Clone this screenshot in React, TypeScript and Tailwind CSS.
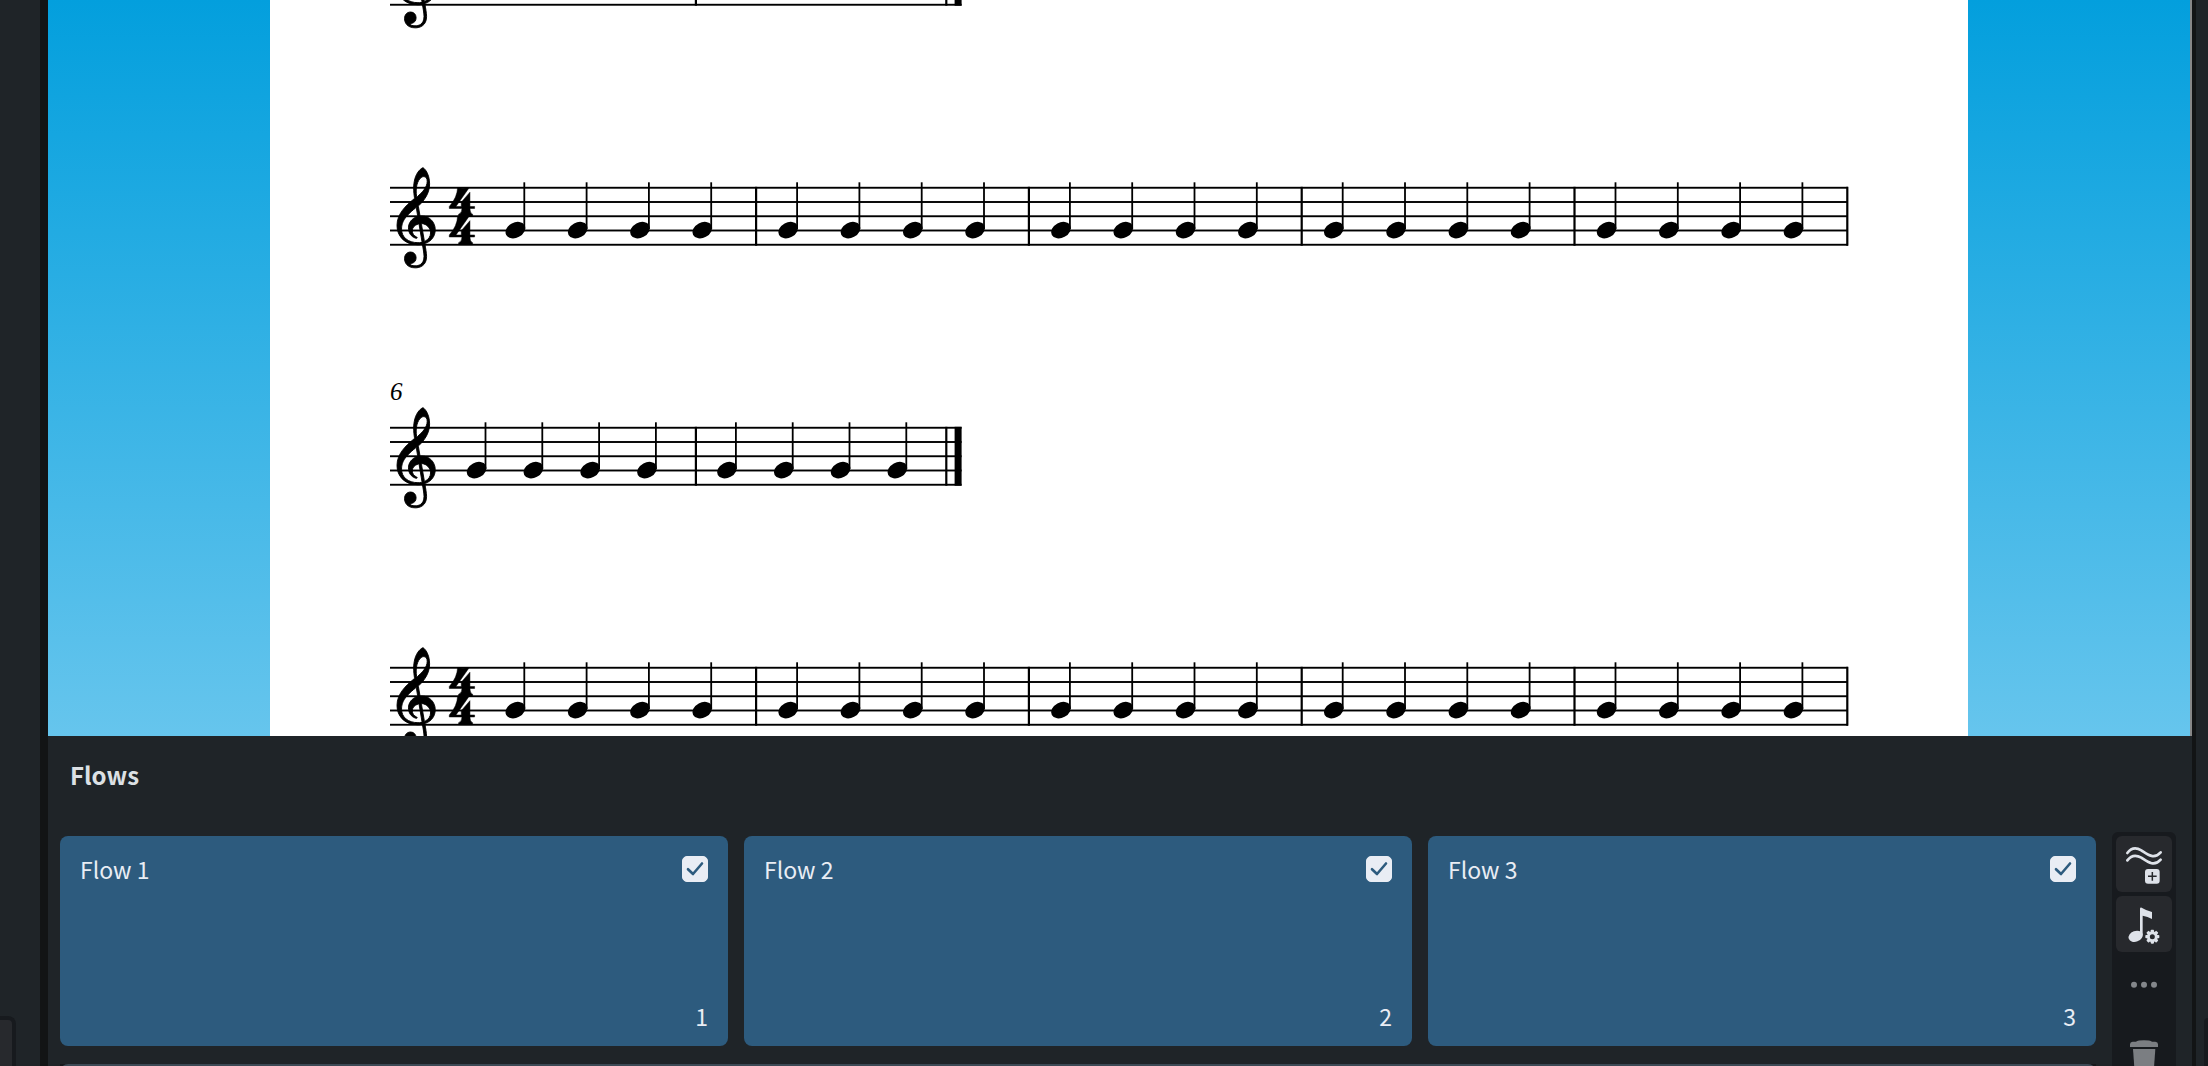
import React from "react";

const G_CLEF =
  "M364 -252c-245 0 -364 165 -364 339c0 202 153 345 297 464c12 10 11 12 9 24c-7 41 -14 106 -14 164c0 104 24 229 98 311c20 22 51 48 65 48c11 0 37 -28 52 -50c41 -60 65 -146 65 -233c0 -153 -82 -280 -190 -381c-6 -6 -8 -7 -6 -19l25 -145c3 -18 3 -18 29 -18c147 0 241 -113 241 -241c0 -113 -67 -198 -168 -238c-14 -6 -15 -5 -13 -17c11 -62 29 -157 29 -214c0 -170 -130 -200 -197 -200c-151 0 -190 98 -190 163c0 62 40 115 107 115c61 0 96 -47 96 -102c0 -58 -36 -85 -67 -94c-23 -7 -32 -10 -32 -17c0 -13 26 -29 80 -29c59 0 158 18 158 166c0 47 -15 134 -27 201c-2 12 -4 11 -15 9c-20 -4 -46 -6 -69 -6zM80 20c0 -139 113 -236 288 -236c20 0 40 2 56 5c15 3 16 3 14 14l-50 298c-2 11 -4 12 -20 8c-61 -17 -100 -60 -100 -117c0 -46 30 -89 72 -107c7 -3 15 -6 15 -13c0 -6 -4 -11 -12 -11c-7 0 -19 3 -27 6c-68 23 -115 87 -115 177c0 85 57 164 145 194c18 6 18 5 15 24l-21 128c-2 11 -4 12 -14 4c-47 -38 -93 -75 -153 -142c-83 -94 -93 -173 -93 -232zM470 943c-61 0 -133 -96 -133 -252c0 -32 2 -66 6 -92c2 -13 6 -14 13 -8c79 69 174 159 174 270c0 55 -27 82 -60 82zM441 117c-12 1 -13 -2 -11 -14l49 -285c2 -12 4 -12 16 -6c56 28 94 79 94 142c0 88 -67 156 -148 163z";

const METER_FOUR =
  "M25 0Q41 4 58 0V3L20 57H36V44L62 14V57H76V63H62Q62 77 70 80V86H28V80Q38 77 38 63H0V57Q24 30 25 0Z";

const TOP = 59.8;
const GAP = 14.25;

type SystemProps = {
  measures: number;
  width: number;
  firstStem: number;
  noteGap: number;
  measureWidth: number;
  meter?: boolean;
  final?: boolean;
  label?: string;
};

function Note({ x }: { x: number }) {
  const y = TOP + GAP * 3 - 0.4;
  return (
    <g>
      <ellipse cx={x - 8.9} cy={y} rx="10.4" ry="7.6" transform={`rotate(-28 ${x - 8.9} ${y})`} />
      <rect x={x - 0.9} y={TOP - 5.5} width="1.8" height={GAP * 3 + 4} />
    </g>
  );
}

function System({ measures, width, firstStem, noteGap, measureWidth, meter, final, label }: SystemProps) {
  const firstBar = width - (final ? 15.4 : 0.8) - measureWidth * (measures - 1);
  return (
    <svg viewBox="0 0 1458 240" className="block w-full overflow-visible" fill="#000" role="img" aria-label="Staff">
      {[0, 1, 2, 3, 4].map((i) => (
        <rect key={i} x="0" y={TOP + i * GAP - 1} width={width} height="1.9" />
      ))}
      <g transform={`translate(7 ${TOP + GAP * 3 - 0.2}) scale(0.057 -0.057)`} stroke="#000" strokeWidth="16">
        <path d={G_CLEF} />
      </g>
      {meter && (
        <g stroke="#000" strokeWidth="1.5">
          <path d={METER_FOUR} transform={`translate(59.3 ${TOP - 0.3}) scale(0.333)`} />
          <path d={METER_FOUR} transform={`translate(59.3 ${TOP + GAP * 2 - 0.3}) scale(0.333)`} />
        </g>
      )}
      {Array.from({ length: measures }, (_, m) => (
        <g key={m}>
          {[0, 1, 2, 3].map((n) => (
            <Note key={n} x={firstStem + m * measureWidth + n * noteGap} />
          ))}
          <rect x={firstBar + m * measureWidth - 1} y={TOP - 1} width="2.2" height={GAP * 4 + 1.9} />
        </g>
      ))}
      {final && <rect x={width - 7} y={TOP - 1} width="7" height={GAP * 4 + 1.9} />}
      {label && (
        <text x="0" y="32" fontFamily="'Liberation Serif', serif" fontStyle="italic" fontSize="25">
          {label}
        </text>
      )}
    </svg>
  );
}

function LongSystem() {
  return <System measures={5} width={1458} firstStem={134.3} noteGap={62.3} measureWidth={272.8} meter />;
}

function ShortSystem({ label }: { label?: string }) {
  return (
    <System measures={2} width={571.6} firstStem={95.5} noteGap={56.8} measureWidth={250.4} final label={label} />
  );
}

function FlowCard({ index }: { index: number }) {
  const id = `flow-${index}`;
  return (
    <article className="flex h-[210px] flex-1 flex-col justify-between rounded-lg bg-[#2d5b7e] px-5 pt-5 pb-[14px] text-[23px] text-[#e9edf4]">
      <div className="flex h-[26px] items-center justify-between">
        <label htmlFor={id}>Flow {index}</label>
        <span className="grid">
          <input
            id={id}
            type="checkbox"
            defaultChecked
            className="peer col-start-1 row-start-1 size-[26px] appearance-none rounded-[5px] border border-[#e9edf4] checked:bg-[#e9edf4]"
          />
          <svg
            viewBox="0 0 26 26"
            className="pointer-events-none invisible col-start-1 row-start-1 size-[26px] peer-checked:visible"
            fill="none"
            stroke="#2d5b7e"
            strokeWidth="2.6"
            strokeLinecap="round"
            strokeLinejoin="round"
          >
            <path d="M6 13.2L11 18L20 7.5" />
          </svg>
        </span>
      </div>
      <span className="text-right leading-8">{index}</span>
    </article>
  );
}

const TEETH = [0, 45, 90, 135, 180, 225, 270, 315];

function ToolButton({ label, raised, children }: { label: string; raised?: boolean; children: React.ReactNode }) {
  return (
    <button
      type="button"
      aria-label={label}
      className={raised ? "size-14 shrink-0 rounded-md bg-[#27292d]" : "size-14 shrink-0 rounded-md"}
    >
      <svg viewBox="0 0 168 168" className="block size-14">
        {children}
      </svg>
    </button>
  );
}

function Toolbar() {
  return (
    <div className="-mt-1 flex h-[340px] w-16 flex-col items-center gap-1 rounded-md bg-[#171a1e] pt-1">
      <ToolButton label="Add flow" raised>
        <g fill="none" stroke="#dee2e9" strokeWidth="8" strokeLinecap="round">
          <path d="M34 51C46 35 62 35 76 43C94 55 114 72 134 49" />
          <path d="M34 73C46 57 62 57 76 65C94 77 114 94 134 71" />
        </g>
        <rect x="87" y="99" width="44" height="44" rx="9" fill="#dee2e9" />
        <path d="M109 108v26M96 121h26" stroke="#27292d" strokeWidth="4.5" />
      </ToolButton>
      <ToolButton label="Flow settings" raised>
        <g fill="#dee2e9">
          <ellipse cx="59" cy="121" rx="22" ry="16" transform="rotate(-20 59 121)" />
          <path d="M72 38Q72 34 77 35Q88 42 108 48V69Q95 61 80 59V118H72Z" />
          <circle cx="109" cy="122" r="16" />
          {TEETH.map((a) => (
            <rect key={a} x="104" y="101" width="10" height="10" rx="2.5" transform={`rotate(${a} 109 122)`} />
          ))}
        </g>
        <circle cx="109" cy="122" r="7.5" fill="#27292d" />
      </ToolButton>
      <ToolButton label="More">
        <g fill="#84878b">
          <circle cx="54" cy="86" r="9" />
          <circle cx="84" cy="86" r="9" />
          <circle cx="114" cy="86" r="9" />
        </g>
      </ToolButton>
      <div className="pt-3">
        <ToolButton label="Delete flow">
          <g fill="#7b7e82">
            <path d="M42 57V49Q42 42 50 41H60Q66 37 84 37Q102 37 108 41H118Q126 42 126 49V57Z" />
            <path d="M51 63H118L113 132Q112 140 104 140H64Q57 140 56 132Z" />
          </g>
        </ToolButton>
      </div>
    </div>
  );
}

export default function App() {
  return (
    <div className="flex h-screen overflow-hidden bg-[#1f2428] font-['Noto_Sans_CJK_JP','Noto_Sans',sans-serif]">
      <aside className="flex w-10 shrink-0 flex-col justify-end">
        <div className="h-[50px] w-4 rounded-tr-lg border-t-4 border-r-4 border-[#171a1e] bg-[#27292d]" />
      </aside>
      <div className="w-2 shrink-0 bg-[#121415]" />

      <div className="flex min-w-0 flex-1 flex-col">
        <main className="min-h-0 flex-1 overflow-hidden border-r-2 border-[#878787] bg-linear-to-b/srgb from-[#039fdd] to-[#66c5ed] px-[222px]">
          <div className="h-full overflow-hidden bg-white px-[120px]">
            <div className="-mt-28">
              <ShortSystem />
              <LongSystem />
              <ShortSystem label="6" />
              <LongSystem />
            </div>
          </div>
        </main>

        <section className="h-[330px] shrink-0 overflow-hidden pr-4 pl-3">
          <h2 className="h-[100px] pt-[23px] pl-[10px] text-2xl leading-8 font-bold text-[#dce0e4]">Flows</h2>
          <div className="flex gap-4">
            <div className="min-w-0 flex-1">
              <div className="flex gap-4">
                <FlowCard index={1} />
                <FlowCard index={2} />
                <FlowCard index={3} />
              </div>
              <div className="mt-[18px] bg-[#17191c]">
                <div className="h-4 rounded-lg bg-[#3d4a56]" />
              </div>
            </div>
            <Toolbar />
          </div>
        </section>
      </div>

      <div className="w-1 shrink-0 bg-[#121415]" />
      <aside className="flex w-3 shrink-0 flex-col items-end justify-end">
        <div className="h-12 w-1 rounded-tl-sm bg-[#171a1e]" />
      </aside>
    </div>
  );
}
